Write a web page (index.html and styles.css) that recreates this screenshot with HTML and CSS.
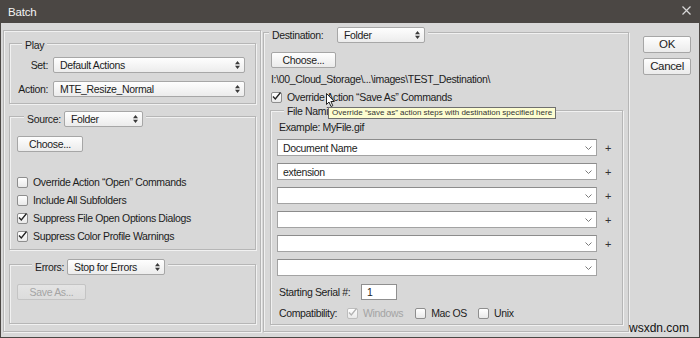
FILE: index.html
```html
<html>
  <meta charset="UTF-8" />
  <head>
    <title>Batch</title>
    <link rel="stylesheet" href="styles.css">
  </head>
  <body>
    <div class="dialog">
      <div class="titlebar">
        <span>Batch</span>
        <svg class="close" width="9" height="9" viewBox="0 0 9 9"><path d="M0.5 0.5 L8.5 8.5 M8.5 0.5 L0.5 8.5" /></svg>
      </div>
      <div class="main">
        <div class="panel left">
          <div class="group play">
            <div class="legend">Play</div>
            <div class="rows">
              <label>Set:</label>
              <div class="select"><span>Default Actions</span><svg class="updown" width="5" height="8" viewBox="0 0 5 8"><path d="M0 3.2 L2.5 0 L5 3.2Z M0 4.8 L2.5 8 L5 4.8Z" /></svg></div>
              <label>Action:</label>
              <div class="select"><span>MTE_Resize_Normal</span><svg class="updown" width="5" height="8" viewBox="0 0 5 8"><path d="M0 3.2 L2.5 0 L5 3.2Z M0 4.8 L2.5 8 L5 4.8Z" /></svg></div>
            </div>
          </div>
          <div class="group source">
            <div class="legend">
              <label>Source:</label>
              <div class="select w79"><span>Folder</span><svg class="updown" width="5" height="8" viewBox="0 0 5 8"><path d="M0 3.2 L2.5 0 L5 3.2Z M0 4.8 L2.5 8 L5 4.8Z" /></svg></div>
            </div>
            <div class="button choose-src">Choose...</div>
            <div class="checks">
              <div class="checkrow"><span class="check"></span>Override Action “Open” Commands</div>
              <div class="checkrow"><span class="check"></span>Include All Subfolders</div>
              <div class="checkrow"><span class="check"><svg width="11" height="11" viewBox="0 0 11 11"><path d="M2 5.5 L4.3 8 L9.5 1.5" /></svg></span>Suppress File Open Options Dialogs</div>
              <div class="checkrow"><span class="check"><svg width="11" height="11" viewBox="0 0 11 11"><path d="M2 5.5 L4.3 8 L9.5 1.5" /></svg></span>Suppress Color Profile Warnings</div>
            </div>
          </div>
          <div class="group errors">
            <div class="legend">
              <label>Errors:</label>
              <div class="select w98"><span>Stop for Errors</span><svg class="updown" width="5" height="8" viewBox="0 0 5 8"><path d="M0 3.2 L2.5 0 L5 3.2Z M0 4.8 L2.5 8 L5 4.8Z" /></svg></div>
            </div>
            <div class="button disabled saveas">Save As...</div>
          </div>
        </div>
        <div class="panel right">
          <div class="legend">
            <label>Destination:</label>
            <div class="select w88"><span>Folder</span><svg class="updown" width="5" height="8" viewBox="0 0 5 8"><path d="M0 3.2 L2.5 0 L5 3.2Z M0 4.8 L2.5 8 L5 4.8Z" /></svg></div>
          </div>
          <div class="button choose-dst">Choose...</div>
          <div class="path">I:\00_Cloud_Storage\...\images\TEST_Destination\</div>
          <div class="checkrow dst-check"><span class="check"><svg width="11" height="11" viewBox="0 0 11 11"><path d="M2 5.5 L4.3 8 L9.5 1.5" /></svg></span>Override Action “Save As” Commands</div>
          <div class="group naming">
            <div class="legend">File Naming</div>
            <div class="example">Example: MyFile.gif</div>
            <div class="fields">
              <div class="fieldrow"><div class="dropdown"><span>Document Name</span><svg width="7" height="4" viewBox="0 0 7 4"><path d="M0.5 0.5 L3.5 3.5 L6.5 0.5" /></svg></div><span class="plus">+</span></div>
              <div class="fieldrow"><div class="dropdown"><span>extension</span><svg width="7" height="4" viewBox="0 0 7 4"><path d="M0.5 0.5 L3.5 3.5 L6.5 0.5" /></svg></div><span class="plus">+</span></div>
              <div class="fieldrow"><div class="dropdown"><span></span><svg width="7" height="4" viewBox="0 0 7 4"><path d="M0.5 0.5 L3.5 3.5 L6.5 0.5" /></svg></div><span class="plus">+</span></div>
              <div class="fieldrow"><div class="dropdown"><span></span><svg width="7" height="4" viewBox="0 0 7 4"><path d="M0.5 0.5 L3.5 3.5 L6.5 0.5" /></svg></div><span class="plus">+</span></div>
              <div class="fieldrow"><div class="dropdown"><span></span><svg width="7" height="4" viewBox="0 0 7 4"><path d="M0.5 0.5 L3.5 3.5 L6.5 0.5" /></svg></div><span class="plus">+</span></div>
              <div class="fieldrow"><div class="dropdown"><span></span><svg width="7" height="4" viewBox="0 0 7 4"><path d="M0.5 0.5 L3.5 3.5 L6.5 0.5" /></svg></div></div>
            </div>
            <div class="serial">
              <label>Starting Serial #:</label>
              <div class="textbox">1</div>
            </div>
            <div class="compat">
              <label>Compatibility:</label>
              <span class="opt off"><span class="check"><svg width="11" height="11" viewBox="0 0 11 11"><path d="M2 5.5 L4.3 8 L9.5 1.5" /></svg></span>Windows</span>
              <span class="opt mac"><span class="check"></span>Mac OS</span>
              <span class="opt"><span class="check"></span>Unix</span>
            </div>
          </div>
        </div>
        <div class="buttons">
          <div class="button big">OK</div>
          <div class="button big">Cancel</div>
        </div>
      </div>
      <div class="tooltip">Override “save as” action steps with destination specified here</div>
      <svg class="cursor" width="10" height="15" viewBox="0 0 10 15"><path d="M0.5 0.5 L0.5 11.5 L3 9 L5 13.5 L6.8 12.7 L4.9 8.5 L8.3 8.5 Z" /></svg>
      <div class="watermark">wsxdn.com</div>
    </div>
  </body>
</html>
```

FILE: styles.css
```css
html, body {
  margin: 0; padding: 0; width: 700px; height: 338px; overflow: hidden;
}
body {
  font-family: "Liberation Sans", Arial, sans-serif;
  font-size: 10.5px; letter-spacing: -0.35px; color: #1c1c1c; background-color: #d8d8d8;
}
.dialog {
  position: relative; box-sizing: border-box;
  width: 700px; height: 338px; display: flex; flex-direction: column;
  background-color: #d8d8d8; border: #4b4744 solid 1px; border-top: none;
}
.titlebar {
  height: 23px; flex: none; background-color: #4b4744; color: #f4f4f4;
  display: flex; align-items: center; justify-content: space-between;
  padding: 0 9px 0 8px; font-size: 11.5px; letter-spacing: -0.2px; margin: 0 -1px;
}
.titlebar .close { stroke: #d8d8d8; stroke-width: 1.2; margin-top: -2px; }
.main {
  flex: 1; display: flex; align-items: stretch;
  padding: 7px 0 5px 2px;
}
label { white-space: nowrap; }

/* etched boxes */
.panel, .group {
  box-sizing: border-box; border: #b6b6b6 solid 1px;
  box-shadow: inset 1px 1px 0 #f1f1f1, 1px 1px 0 #f1f1f1;
  display: flex; flex-direction: column; align-items: flex-start;
}
.legend {
  display: flex; align-items: center; gap: 5px;
  background-color: #d8d8d8; padding: 0 3px; line-height: 13px;
}

/* left column */
.panel.left { width: 258px; padding: 0 4px 0 5px; }
.left .group { width: 247px; }
.group.play { margin-top: 12px; padding-bottom: 6px; }
.play .legend { margin: -5px 0 0 12px; }
.play .rows {
  display: grid; grid-template-columns: 38px 192px;
  column-gap: 5px; row-gap: 8px; align-items: center; margin-top: 5px;
}
.play .rows label { text-align: right; }
.group.source { margin-top: 12px; padding-bottom: 4px; }
.source .legend { margin: -6px 0 0 14px; }
.source .legend label { width: 32px; }
.group.errors { margin-top: 14px; padding-bottom: 23px; }
.errors .legend { margin: -6px 0 0 22px; gap: 3px; }
.errors .legend label { width: 29px; }
.choose-src { margin: 9px 0 0 7px; width: 66px; }
.checks { margin: 21px 0 0 7px; }
.checkrow { display: flex; align-items: center; gap: 5px; height: 18px; }
.saveas { margin: 9px 0 0 7px; width: 69px; }

/* selects */
.select {
  box-sizing: border-box; height: 16px; width: 192px;
  display: flex; align-items: center; justify-content: space-between;
  border: #a7a7a7 solid 1px; border-radius: 2px;
  background: linear-gradient(#fefefe, #ececec);
  padding: 0 4px 0 6px;
}
.select.w79 { width: 79px; }
.select.w98 { width: 98px; }
.select.w88 { width: 88px; }
.updown { fill: #3a3a3a; }

/* buttons */
.button {
  box-sizing: border-box; height: 16px; line-height: 14px;
  text-align: center; border: #a6a6a6 solid 1px; border-radius: 2px;
  background: linear-gradient(#fefefe, #ebebeb);
}
.button.disabled {
  color: #a4a4a4; border-color: #c4c4c4;
  background: linear-gradient(#e4e4e4, #dcdcdc);
}
.button.big { width: 48px; height: 17px; line-height: 15px; font-size: 11.5px; }

/* checkboxes */
.check {
  box-sizing: border-box; width: 11px; height: 11px; flex: none;
  border: #8e8e8e solid 1px; border-radius: 2px;
  background: linear-gradient(#ffffff, #e9e9e9);
  position: relative;
}
.check svg {
  position: absolute; left: -1px; top: -2px; overflow: visible;
  fill: none; stroke: #222; stroke-width: 1.3;
}

/* right column */
.panel.right { width: 366px; margin: 2px 0 0 2px; padding: 0 5px 0 0; }
.right > .legend { margin: -6px 0 0 5px; gap: 4px; }
.right > .legend label { width: 61px; }
.choose-dst { margin: 9px 0 0 7px; width: 65px; }
.path { margin: 4px 0 0 7px; line-height: 14px; }
.dst-check { margin: 2px 0 0 7px; }
.group.naming { width: 353px; margin: 4px 0 0 6px; padding-bottom: 3px; }
.naming .legend { margin: -6px 0 0 13px; }
.example { margin: 2px 0 0 8px; line-height: 14px; }
.fields { margin: 5px 0 0 6px; display: flex; flex-direction: column; gap: 7px; }
.fieldrow { display: flex; align-items: center; gap: 8px; }
.dropdown {
  box-sizing: border-box; width: 320px; height: 17px;
  display: flex; align-items: center; justify-content: space-between;
  background-color: #fff; border: #a3a3a3 solid 1px;
  border-top-color: #8c8c8c; padding: 0 4px 0 5px;
}
.dropdown svg { fill: none; stroke: #7a7a7a; stroke-width: 1; }
.plus { font-size: 11px; color: #333; }
.serial { margin: 8px 0 0 8px; display: flex; align-items: center; gap: 10px; }
.serial label { width: 72px; }
.textbox {
  box-sizing: border-box; width: 36px; height: 16px; line-height: 14px;
  background-color: #fff; border: #8f8f8f solid 1px; padding-left: 5px;
}
.compat { margin: 5px 0 0 8px; display: flex; align-items: center; height: 16px; }
.compat label { width: 60px; margin-right: 8px; }
.opt { display: flex; align-items: center; gap: 5px; margin-right: 15px; }
.opt.off { color: #a4a4a4; margin-right: 12px; }
.opt.off .check { border-color: #bdbdbd; }
.opt.off .check svg { stroke: #b3b3b3; }
.opt.mac { margin-right: 11px; }

/* dialog buttons */
.buttons {
  margin: 6px 0 0 14px; display: flex; flex-direction: column; gap: 5px;
}

/* overlays */
.tooltip {
  position: absolute; left: 327px; top: 107px; width: 228px; height: 12px;
  box-sizing: border-box; background-color: #fdfdd0;
  border: #6f6f6f solid 1px; font-size: 8px; letter-spacing: 0; line-height: 10px;
  padding-left: 3px; color: #333; white-space: nowrap; overflow: hidden;
}
.cursor {
  position: absolute; left: 325px; top: 93px;
  fill: #fff; stroke: #222; stroke-width: 1;
}
.watermark {
  position: absolute; left: 628px; top: 321px;
  font-size: 12px; letter-spacing: 0; color: #111;
}
```
